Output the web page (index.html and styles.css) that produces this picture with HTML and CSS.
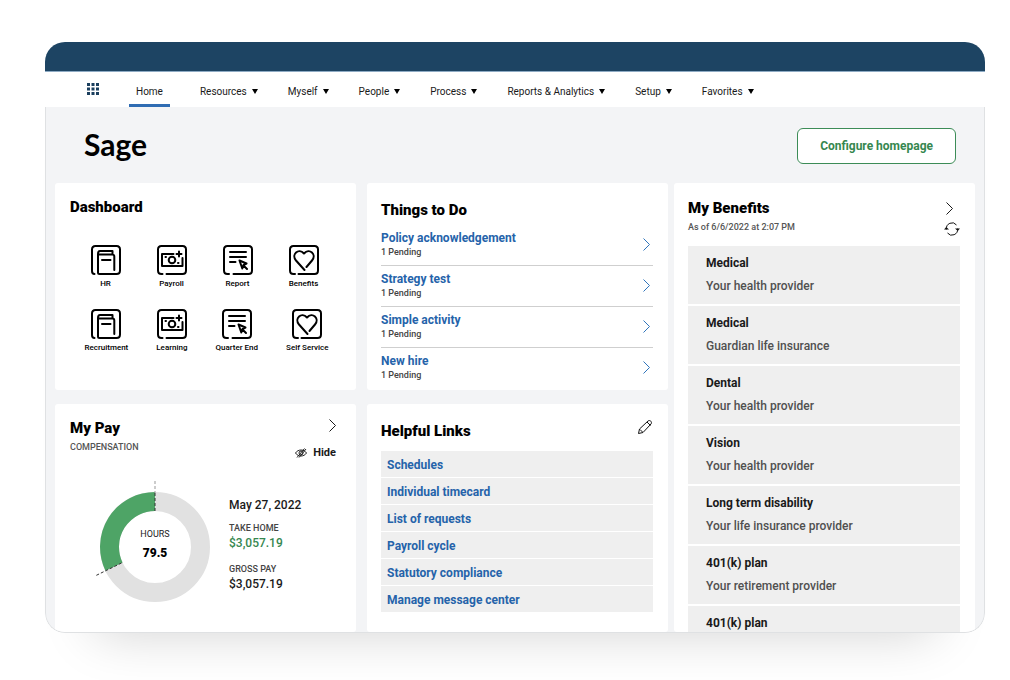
FILE: index.html
```html
<!DOCTYPE html>
<html lang="en">
<head>
<meta charset="utf-8">
<meta name="viewport" content="width=device-width, initial-scale=1">
<title>Sage – Home</title>
<link rel="stylesheet" href="styles.css">
</head>
<body>
<svg class="sprite" aria-hidden="true">
  <symbol id="chevron" viewBox="0 0 7 13"><path d="M.5.5l6 6-6 6"/></symbol>
  <symbol id="hr" viewBox="0 0 30 30">
    <path d="M3.500 29C2 29 1 28 1 26V4.500C1 2.500 2.500 1 4.500 1h21C27.500 1 29 2.500 29 4.500v21c0 2-1.500 3.500-3.500 3.500H8.500C7.500 29 7 28.500 7 27.500V9c0-2 .5-3 2-3h12.500v3.500H8M21.500 9.500c1.300 0 1.800.5 1.800 2V25M11 15h8.500"/>
  </symbol>
  <symbol id="money" viewBox="0 0 30 30">
    <path d="M5.500 29h-1C2.500 29 1 27.500 1 25.500v-21C1 2.500 2.500 1 4.500 1h21C27.500 1 29 2.500 29 4.500v21c0 2-1.500 3.500-3.500 3.500H9.500M16.500 9H5v12h20.500v-8M8.500 12H9M21 18h.5M22 6.500v5M19.500 9h5"/><circle cx="15" cy="15" r="3.300"/>
  </symbol>
  <symbol id="report" viewBox="0 0 30 30">
    <path d="M6 29H4.500C2.500 29 1 27.500 1 25.500v-21C1 2.500 2.500 1 4.500 1h21C27.500 1 29 2.500 29 4.500v21c0 2-1.500 3.500-3.500 3.500H10.500M7 7h16M7 12h16M7 17h5.500M16.500 15.500l7 3-3 1.500-1.200 3.500zM20.500 20.500l3.500 3.500"/>
  </symbol>
  <symbol id="heart" viewBox="0 0 30 30">
    <path d="M6 29H4.500C2.500 29 1 27.500 1 25.500v-21C1 2.500 2.500 1 4.500 1h21C27.500 1 29 2.500 29 4.500v21c0 2-1.500 3.500-3.500 3.500H9.500M15.500 25L7 15.500C2 9.500 9.500 2.500 15 8.500c5.500-6 13 1 8 7l-5.500 6.500"/>
  </symbol>
</svg>
<div class="window">
  <div class="titlebar"></div>
  <nav class="nav" aria-label="Main">
    <button class="apps" aria-label="Applications">
      <svg viewBox="0 0 12 12"><path d="M0 0h3v3H0zM4.500 0h3v3h-3zM9 0h3v3H9zM0 4.500h3v3H0zM4.500 4.500h3v3h-3zM9 4.500h3v3H9zM0 9h3v3H0zM4.500 9h3v3h-3zM9 9h3v3H9z"/></svg>
    </button>
    <a class="tab tab-current" href="#" aria-current="page">Home</a>
    <a class="tab" href="#">Resources<i class="caret"></i></a>
    <a class="tab" href="#">Myself<i class="caret"></i></a>
    <a class="tab" href="#">People<i class="caret"></i></a>
    <a class="tab" href="#">Process<i class="caret"></i></a>
    <a class="tab" href="#">Reports &amp; Analytics<i class="caret"></i></a>
    <a class="tab" href="#">Setup<i class="caret"></i></a>
    <a class="tab" href="#">Favorites<i class="caret"></i></a>
  </nav>
  <main class="content">
    <header class="banner">
      <svg class="logo" viewBox="0 0 72 44" role="img" aria-label="Sage"><text x="0" y="29">Sage</text></svg>
      <button class="configure">Configure homepage</button>
    </header>
    <div class="board">
      <div class="cards">
        <section class="card">
          <h2>Dashboard</h2>
          <div class="tiles">
            <a class="tile" href="#"><svg><use href="#hr"/></svg>HR</a>
            <a class="tile" href="#"><svg><use href="#money"/></svg>Payroll</a>
            <a class="tile" href="#"><svg><use href="#report"/></svg>Report</a>
            <a class="tile" href="#"><svg><use href="#heart"/></svg>Benefits</a>
          </div>
          <div class="tiles tiles-wide">
            <a class="tile" href="#"><svg><use href="#hr"/></svg>Recruitment</a>
            <a class="tile" href="#"><svg><use href="#money"/></svg>Learning</a>
            <a class="tile" href="#"><svg><use href="#report"/></svg>Quarter End</a>
            <a class="tile" href="#"><svg><use href="#heart"/></svg>Self Service</a>
          </div>
        </section>
        <section class="card card-todo">
          <h2>Things to Do</h2>
          <ul class="todo">
            <li><div><a href="#">Policy acknowledgement</a><span>1 Pending</span></div><svg class="chevron"><use href="#chevron"/></svg></li>
            <li><div><a href="#">Strategy test</a><span>1 Pending</span></div><svg class="chevron"><use href="#chevron"/></svg></li>
            <li><div><a href="#">Simple activity</a><span>1 Pending</span></div><svg class="chevron"><use href="#chevron"/></svg></li>
            <li><div><a href="#">New hire</a><span>1 Pending</span></div><svg class="chevron"><use href="#chevron"/></svg></li>
          </ul>
        </section>
        <section class="card">
          <div class="head">
            <div><h2>My Pay</h2><p class="note">COMPENSATION</p></div>
            <div class="actions">
              <button class="plain" aria-label="Open pay"><svg class="chevron"><use href="#chevron"/></svg></button>
              <button class="plain hide">
                <svg class="eye" viewBox="0 0 12 10"><path d="M.5 5C3 1 9 1 11.500 5 9 9 3 9 .5 5z"/><circle cx="6" cy="5" r="2"/><path d="M2 9.500L9.500.5M4 9.500L11 1"/></svg>Hide
              </button>
            </div>
          </div>
          <div class="pay">
            <svg class="donut" viewBox="0 0 116 124" role="img" aria-label="Hours 79.5">
              <circle class="ring" cx="60" cy="66" r="45.500"/>
              <path class="share" d="M60 20.500A45.500 45.500 0 0 0 19 85.700"/>
              <path class="dash-out" d="M60 0v12"/>
              <path class="dash" d="M60 12v18M26.500 82L1 94.500"/>
              <text class="hours" x="60" y="56">HOURS</text>
              <text class="total" x="60" y="76">79.5</text>
            </svg>
            <dl class="figures">
              <dt class="date">May 27, 2022</dt>
              <dt>TAKE HOME</dt><dd class="green">$3,057.19</dd>
              <dt>GROSS PAY</dt><dd>$3,057.19</dd>
            </dl>
          </div>
        </section>
        <section class="card card-links">
          <div class="head">
            <h2>Helpful Links</h2>
            <button class="plain" aria-label="Edit links"><svg class="pencil" viewBox="0 0 16 16"><path d="M1.500 14.500l1-4.500 8.500-8c2-1.500 4.500 1 3 3l-8 8.500zM10 3l3.500 3.500M3 10.500L5.500 13"/></svg></button>
          </div>
          <ul class="links">
            <li><a href="#">Schedules</a></li>
            <li><a href="#">Individual timecard</a></li>
            <li><a href="#">List of requests</a></li>
            <li><a href="#">Payroll cycle</a></li>
            <li><a href="#">Statutory compliance</a></li>
            <li><a href="#">Manage message center</a></li>
          </ul>
        </section>
      </div>
      <section class="card card-benefits">
        <div class="head">
          <div><h2>My Benefits</h2><p class="note">As of 6/6/2022 at 2:07 PM</p></div>
          <div class="actions">
            <button class="plain" aria-label="Open benefits"><svg class="chevron"><use href="#chevron"/></svg></button>
            <button class="plain" aria-label="Refresh"><svg class="refresh" viewBox="0 0 16 14"><path d="M2.300 7.500A5.800 6.200 0 0 1 12.500 3M13.700 6.500A5.800 6.200 0 0 1 3.500 11"/><path d="M0 7.500L2.300 5l2.700 2.500zM11 6.500L13.700 9 16 6.500z" class="tip"/></svg></button>
          </div>
        </div>
        <ul class="benefits">
          <li><b>Medical</b><span>Your health provider</span></li>
          <li><b>Medical</b><span>Guardian life insurance</span></li>
          <li><b>Dental</b><span>Your health provider</span></li>
          <li><b>Vision</b><span>Your health provider</span></li>
          <li><b>Long term disability</b><span>Your life insurance provider</span></li>
          <li><b>401(k) plan</b><span>Your retirement provider</span></li>
          <li><b>401(k) plan</b></li>
        </ul>
      </section>
    </div>
  </main>
</div>
</body>
</html>
```
FILE: styles.css
```css
* { box-sizing: border-box; }

body {
  margin: 0;
  height: 100vh;
  padding: 42px 25px 47px 45px;
  background: #fff;
  color: #1a1a1a;
  font: 500 12px/16px Roboto, "Liberation Sans", sans-serif;
}

h2, p, ul, dl, dd { margin: 0; padding: 0; }
ul { list-style: none; }
a { color: inherit; text-decoration: none; }
button { font: inherit; cursor: pointer; }
.sprite { display: none; }

.window {
  display: flex;
  flex-direction: column;
  height: 100%;
  overflow: hidden;
  border-radius: 20px;
  box-shadow: 0 50px 50px -50px rgba(0, 0, 0, .18);
}

.titlebar {
  flex: none;
  height: 30px;
  background: #1d4463;
  border-bottom: 1px solid #8eabc4;
}

.nav {
  flex: none;
  display: flex;
  gap: 30px;
  height: 35px;
  padding-left: 42px;
  background: #fff;
  color: #1a1a1a;
  font-size: 10px;
  font-weight: 400;
}

.apps {
  width: 12px;
  padding: 0;
  border: 0;
  background: none;
}
.apps svg { display: block; width: 12px; height: 12px; margin-bottom: 2px; fill: #1b3f5e; }

.tab {
  display: flex;
  align-items: center;
  gap: 5px;
  padding-top: 7px;
  border-bottom: 3px solid transparent;
  white-space: nowrap;
}
.tab-current { padding: 7px 7px 0; border-color: #2f6cb3; }
.caret {
  border: 3px solid transparent;
  border-top: 5px solid #000;
  border-bottom: 0;
}

.content {
  flex: 1;
  min-height: 0;
  overflow: hidden;
  padding: 0 9px;
  background: #f3f4f6;
  border: 1px solid #dfe1e3;
  border-top: 0;
  border-radius: 0 0 20px 20px;
  display: flex;
  flex-direction: column;
}

.banner {
  flex: none;
  display: flex;
  justify-content: space-between;
  align-items: center;
  height: 76px;
  padding: 2px 19px 0 29px;
}
.logo { width: 72px; height: 44px; margin-top: 6px; }
.logo text { font: 700 30px Lato, sans-serif; fill: #000; }
.configure {
  height: 36px;
  padding: 0 22px;
  border: 1px solid #3c8c57;
  border-radius: 6px;
  background: #fff;
  color: #36874f;
  font-weight: 700;
}

.board {
  flex: 1;
  min-height: 0;
  display: grid;
  grid-template-columns: 613fr 301fr;
  grid-template-rows: minmax(0, 1fr);
  gap: 6px;
}
.cards {
  display: grid;
  grid-template-columns: 1fr 1fr;
  grid-template-rows: auto 1fr;
  gap: 14px 11px;
}

.card {
  min-width: 0;
  padding: 15px 20px 2px 15px;
  background: #fff;
  border-radius: 3px;
}
.card-todo { padding: 18px 15px 2px 14px; }
.card-links { padding: 15px 15px 2px 14px; }
.card-links h2 { padding-top: 3px; }
.card-benefits { padding: 16px 15px 0 14px; overflow: hidden; }

h2 {
  color: #000;
  font-size: 15px;
  font-weight: 900;
  line-height: 18px;
}
.note {
  padding-top: 4px;
  color: #555;
  font-size: 9px;
  line-height: 12px;
}

.tiles {
  display: flex;
  justify-content: center;
  gap: 36px;
  padding: 29px 0 0 3px;
}
.tiles-wide { gap: 28px; padding: 20px 0 0 7px; }
.tile {
  display: flex;
  flex-direction: column;
  align-items: center;
  gap: 4px;
  min-width: 30px;
  color: #000;
  font-size: 8px;
  line-height: 10px;
}
.tile svg {
  width: 30px;
  height: 30px;
  fill: none;
  stroke: #000;
  stroke-width: 2;
  stroke-linecap: round;
  stroke-linejoin: round;
}

.chevron {
  display: block;
  width: 7px;
  height: 13px;
  fill: none;
  stroke: currentColor;
}

.todo { padding-top: 6px; }
.todo li {
  display: flex;
  align-items: center;
  justify-content: space-between;
  padding: 5px 3px 7px 0;
  color: #2563aa;
}
.todo li + li { border-top: 1px solid #cfcfcf; }
.todo a { display: block; font-weight: 700; }
.todo span { display: block; color: #444; font-size: 9px; line-height: 12px; }
.todo .chevron { stroke: #2f74bb; }

.head { display: flex; justify-content: space-between; }
.plain {
  display: flex;
  align-items: center;
  padding: 0;
  border: 0;
  background: none;
  color: #1a1a1a;
}
.actions { display: flex; flex-direction: column; align-items: flex-end; gap: 13px; }
.hide { gap: 6px; font-size: 11px; font-weight: 700; }
.eye { width: 12px; height: 10px; fill: none; stroke: #222; stroke-width: 1; }

.pay { display: flex; gap: 18px; padding: 20px 0 0 25px; }
.donut { flex: none; width: 116px; height: 124px; overflow: visible; }
.donut path, .donut circle { fill: none; }
.ring { stroke: #e1e1e1; stroke-width: 19; }
.donut .share { stroke: #4ea466; stroke-width: 19; }
.dash { stroke: #333; stroke-dasharray: 3 2; }
.dash-out { stroke: #999; stroke-dasharray: 3 2; }
.hours { font-size: 9px; font-weight: 400; text-anchor: middle; fill: #222; }
.total { font-size: 12px; font-weight: 900; text-anchor: middle; fill: #000; }

.figures { padding-top: 16px; color: #444; font-size: 9px; line-height: 12px; }
.figures .date { padding-bottom: 9px; color: #1a1a1a; font-size: 12px; line-height: 16px; }
.figures dd { padding: 1px 0 12px; color: #1a1a1a; font-size: 12px; line-height: 16px; }
.figures .green { color: #36874f; }

.pencil {
  width: 16px;
  height: 16px;
  margin-bottom: 5px;
  fill: none;
  stroke: #111;
  stroke-linejoin: round;
}
.links { display: grid; gap: 1px; padding-top: 11px; }
.links li { padding: 6px 6px 4px; background: #efefef; color: #2563aa; font-weight: 700; }

.card-benefits .head { padding-bottom: 10px; }
.card-benefits .actions { gap: 7px; padding-top: 3px; }
.card-benefits .chevron { margin-right: 7px; }
.refresh { width: 16px; height: 14px; fill: none; stroke: #111; stroke-width: 1; }
.refresh .tip { fill: #111; stroke: none; }
.benefits { display: grid; gap: 2px; }
.benefits li {
  display: flex;
  flex-direction: column;
  gap: 7px;
  padding: 9px 18px 10px;
  background: #efefef;
}
.benefits b { font-weight: 700; }
.benefits span { color: #505050; }
```
